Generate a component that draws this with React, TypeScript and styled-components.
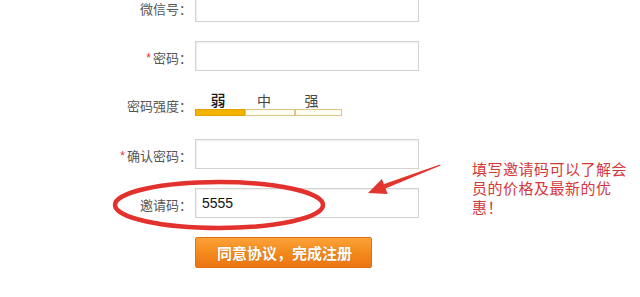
import React from "react";
import styled, { createGlobalStyle } from "styled-components";

const GlobalStyle = createGlobalStyle`
  html, body { margin: 0; padding: 0; background: #fff; }
  body { overflow: hidden; font-family: "Noto Sans CJK SC", "Noto Sans", sans-serif; }
`;

const Page = styled.div`
  position: relative;
  width: 640px;
  height: 297px;
  overflow: hidden;
  display: flex;
  align-items: flex-start;
`;

const Form = styled.div`
  display: flex;
  flex-direction: column;
  width: 419px;
  margin-top: -8px;
`;

const Row = styled.div<{ $top: number; $h?: number; $align?: string }>`
  display: flex;
  align-items: ${(p) => p.$align || "center"};
  gap: 3px;
  height: ${(p) => p.$h ?? 30}px;
  margin-top: ${(p) => p.$top}px;
`;

const Label = styled.div<{ $shift?: number }>`
  width: 192px;
  flex: none;
  text-align: right;
  font-size: 13px;
  line-height: 20px;
  padding-top: ${(p) => p.$shift ?? 3}px;
  color: #555;
  font-family: "Noto Sans CJK SC", sans-serif;
  white-space: nowrap;
`;

const Star = styled.span`
  color: #d33;
  font-family: "Liberation Sans", sans-serif;
  font-size: 12px;
  margin-right: 2px;
  vertical-align: 1px;
`;

const Input = styled.div`
  box-sizing: border-box;
  width: 224px;
  height: 100%;
  border: 1px solid #d2d2d2;
  box-shadow: inset 1px 1px 2px rgba(0, 0, 0, 0.07);
  background: #fff;
  display: flex;
  align-items: center;
  padding-left: 6px;
  font-family: "Liberation Sans", Arial, sans-serif;
  font-size: 14px;
  color: #111;
`;

const Meter = styled.div`
  width: 147px;
  display: flex;
  flex-direction: column;
`;

const MeterTexts = styled.div`
  display: grid;
  grid-template-columns: 50px 50px 47px;
  height: 16px;
`;

const MeterText = styled.div<{ $active?: boolean; $pad: number }>`
  text-align: center;
  font-size: ${(p) => (p.$active ? 15 : 14)}px;
  line-height: 16px;
  color: ${(p) => (p.$active ? "#1a1a1a" : "#444")};
  font-weight: ${(p) => (p.$active ? 500 : 400)};
  font-family: "Noto Sans CJK SC", sans-serif;
  padding-right: ${(p) => p.$pad}px;
`;

const Bar = styled.div`
  display: grid;
  grid-template-columns: 50px 50px 47px;
  height: 7px;
  margin-top: 1px;
`;

const Seg = styled.div<{ $active?: boolean }>`
  box-sizing: border-box;
  height: 7px;
  border: 1px solid ${(p) => (p.$active ? "#e2a100" : "#dcc68e")};
  background: ${(p) => (p.$active ? "#f3b400" : "#fffdf2")};
`;

const ButtonRow = styled.div`
  display: flex;
  margin-top: 19px;
  padding-left: 195px;
`;

const Button = styled.button`
  box-sizing: border-box;
  width: 177px;
  height: 31px;
  border: 1px solid #e07010;
  border-radius: 2px;
  background: linear-gradient(#fba23a, #f38a1c 50%, #ec7512);
  color: #fff;
  font-family: "Noto Sans CJK SC", sans-serif;
  font-size: 15px;
  font-weight: 700;
  text-shadow: 0 0 1px rgba(150, 60, 0, 0.5);
  padding: 0 0 0 2px;
  cursor: pointer;
`;

const Note = styled.div`
  margin-left: 53px;
  margin-top: 159px;
  font-family: "Noto Sans CJK SC", sans-serif;
  font-size: 15px;
  line-height: 19px;
  letter-spacing: 0.5px;
  color: #d3383a;
`;

const Overlay = styled.svg`
  position: absolute;
  left: 0;
  top: 0;
  pointer-events: none;
`;

export default function App() {
  return (
    <>
      <GlobalStyle />
      <Page>
        <Form>
          <Row $top={0}>
            <Label>微信号：</Label>
            <Input />
          </Row>
          <Row $top={19}>
            <Label>
              <Star>*</Star>密码：
            </Label>
            <Input />
          </Row>
          <Row $top={21} $h={24} $align="flex-end">
            <Label $shift={0}>密码强度：</Label>
            <Meter>
              <MeterTexts>
                <MeterText $active $pad={4}>弱</MeterText>
                <MeterText $pad={12}>中</MeterText>
                <MeterText $pad={14}>强</MeterText>
              </MeterTexts>
              <Bar>
                <Seg $active />
                <Seg />
                <Seg />
              </Bar>
            </Meter>
          </Row>
          <Row $top={23}>
            <Label>
              <Star>*</Star>确认密码：
            </Label>
            <Input />
          </Row>
          <Row $top={19}>
            <Label>邀请码：</Label>
            <Input>5555</Input>
          </Row>
          <ButtonRow>
            <Button>同意协议，完成注册</Button>
          </ButtonRow>
        </Form>
        <Note>
          填写邀请码可以了解会
          <br />
          员的价格及最新的优
          <br />
          惠！
        </Note>
        <Overlay width="640" height="297" viewBox="0 0 640 297">
          <ellipse cx="219" cy="205" rx="104" ry="23" fill="none" stroke="#e3312d" strokeWidth="4.5" />
          <polygon points="440,164.4 440.6,165.6 385.5,188.5 383.5,184.2" fill="#e3352f" />
          <polygon points="368,193 381.9,179 387.7,193.9" fill="#e3352f" />
        </Overlay>
      </Page>
    </>
  );
}
